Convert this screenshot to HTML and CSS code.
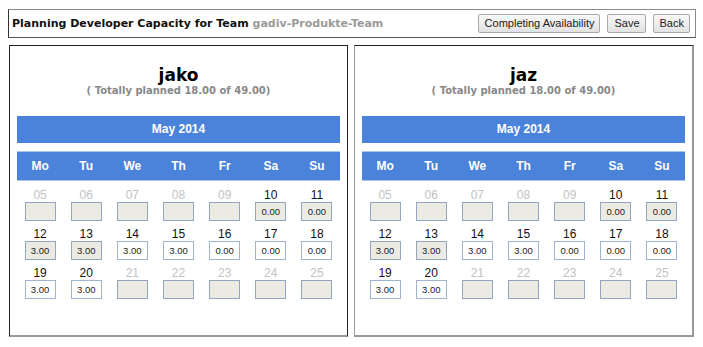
FILE: index.html
```html
<!DOCTYPE html>
<html>
<head>
<meta charset="utf-8">
<link rel="stylesheet" href="styles.css">
</head>
<body>
<div class="topbar">
  <div class="title">Planning Developer Capacity for Team <span class="team">gadiv-Produkte-Team</span></div>
  <div class="actions">
    <button class="btn">Completing Availability</button>
    <button class="btn">Save</button>
    <button class="btn">Back</button>
  </div>
</div>
<div class="panels">
  <div class="panel panel-left">
    <div class="name">jako</div>
    <div class="total">( Totally planned 18.00 of 49.00)</div>
    <div class="month">May 2014</div>
    <div class="weekdays"><span>Mo</span><span>Tu</span><span>We</span><span>Th</span><span>Fr</span><span>Sa</span><span>Su</span></div>
    <div class="days">
      <div class="day off"><span class="num">05</span><input class="cap locked" value="" readonly></div>
      <div class="day off"><span class="num">06</span><input class="cap locked" value="" readonly></div>
      <div class="day off"><span class="num">07</span><input class="cap locked" value="" readonly></div>
      <div class="day off"><span class="num">08</span><input class="cap locked" value="" readonly></div>
      <div class="day off"><span class="num">09</span><input class="cap locked" value="" readonly></div>
      <div class="day"><span class="num">10</span><input class="cap locked" value="0.00" readonly></div>
      <div class="day"><span class="num">11</span><input class="cap locked" value="0.00" readonly></div>
      <div class="day"><span class="num">12</span><input class="cap locked" value="3.00" readonly></div>
      <div class="day"><span class="num">13</span><input class="cap locked" value="3.00" readonly></div>
      <div class="day"><span class="num">14</span><input class="cap" value="3.00"></div>
      <div class="day"><span class="num">15</span><input class="cap" value="3.00"></div>
      <div class="day"><span class="num">16</span><input class="cap" value="0.00"></div>
      <div class="day"><span class="num">17</span><input class="cap" value="0.00"></div>
      <div class="day"><span class="num">18</span><input class="cap" value="0.00"></div>
      <div class="day"><span class="num">19</span><input class="cap" value="3.00"></div>
      <div class="day"><span class="num">20</span><input class="cap" value="3.00"></div>
      <div class="day off"><span class="num">21</span><input class="cap locked" value="" readonly></div>
      <div class="day off"><span class="num">22</span><input class="cap locked" value="" readonly></div>
      <div class="day off"><span class="num">23</span><input class="cap locked" value="" readonly></div>
      <div class="day off"><span class="num">24</span><input class="cap locked" value="" readonly></div>
      <div class="day off"><span class="num">25</span><input class="cap locked" value="" readonly></div>
    </div>
  </div>
  <div class="panel panel-right">
    <div class="name">jaz</div>
    <div class="total">( Totally planned 18.00 of 49.00)</div>
    <div class="month">May 2014</div>
    <div class="weekdays"><span>Mo</span><span>Tu</span><span>We</span><span>Th</span><span>Fr</span><span>Sa</span><span>Su</span></div>
    <div class="days">
      <div class="day off"><span class="num">05</span><input class="cap locked" value="" readonly></div>
      <div class="day off"><span class="num">06</span><input class="cap locked" value="" readonly></div>
      <div class="day off"><span class="num">07</span><input class="cap locked" value="" readonly></div>
      <div class="day off"><span class="num">08</span><input class="cap locked" value="" readonly></div>
      <div class="day off"><span class="num">09</span><input class="cap locked" value="" readonly></div>
      <div class="day"><span class="num">10</span><input class="cap locked" value="0.00" readonly></div>
      <div class="day"><span class="num">11</span><input class="cap locked" value="0.00" readonly></div>
      <div class="day"><span class="num">12</span><input class="cap locked" value="3.00" readonly></div>
      <div class="day"><span class="num">13</span><input class="cap locked" value="3.00" readonly></div>
      <div class="day"><span class="num">14</span><input class="cap" value="3.00"></div>
      <div class="day"><span class="num">15</span><input class="cap" value="3.00"></div>
      <div class="day"><span class="num">16</span><input class="cap" value="0.00"></div>
      <div class="day"><span class="num">17</span><input class="cap" value="0.00"></div>
      <div class="day"><span class="num">18</span><input class="cap" value="0.00"></div>
      <div class="day"><span class="num">19</span><input class="cap" value="3.00"></div>
      <div class="day"><span class="num">20</span><input class="cap" value="3.00"></div>
      <div class="day off"><span class="num">21</span><input class="cap locked" value="" readonly></div>
      <div class="day off"><span class="num">22</span><input class="cap locked" value="" readonly></div>
      <div class="day off"><span class="num">23</span><input class="cap locked" value="" readonly></div>
      <div class="day off"><span class="num">24</span><input class="cap locked" value="" readonly></div>
      <div class="day off"><span class="num">25</span><input class="cap locked" value="" readonly></div>
    </div>
  </div>
</div>
</body>
</html>
```
FILE: styles.css
```css
html, body {
  margin: 0;
  background: #ffffff;
}
body {
  padding: 9px 7px 0 8px;
  font-family: "DejaVu Sans", Verdana, sans-serif;
  color: #000;
}
.topbar {
  display: flex;
  align-items: center;
  justify-content: space-between;
  height: 27px;
  border: 1px solid #8a8a8a;
  border-left-color: #333;
  border-bottom-color: #555;
  padding: 0 5px 0 3px;
}
.title {
  font-size: 11px;
  font-weight: bold;
  color: #111;
}
.team {
  color: #9a9a9a;
}
.actions {
  display: flex;
  gap: 7px;
}
.btn {
  font-family: "Liberation Sans", Arial, sans-serif;
  font-size: 11px;
  color: #222;
  height: 19px;
  padding: 0 5px 0 6px;
  border: 1px solid #a9a9a9;
  border-radius: 2px;
  background: linear-gradient(#f8f8f8, #e2e2e2);
  line-height: 17px;
}
.panels {
  display: flex;
  gap: 6px;
  margin: 7px 2px 0 1px;
}
.panel {
  flex: 1 1 0;
  height: 292px;
  padding: 19px 7px 0 7px;
  box-sizing: border-box;
}
.panel-left {
  border: 1px solid #222;
  border-bottom: 2px solid #999;
}
.panel-right {
  border-top: 1px solid #222;
  border-left: 1px solid #9a9a9a;
  border-right: 2px solid #999;
  border-bottom: 2px solid #999;
}
.name {
  text-align: center;
  font-size: 17px;
  font-weight: bold;
  line-height: 20px;
  color: #000;
}
.total {
  text-align: center;
  font-size: 10px;
  font-weight: bold;
  line-height: 12px;
  color: #888;
}
.month {
  margin-top: 19px;
  height: 27px;
  line-height: 27px;
  background: #4a83d9;
  color: #fff;
  text-align: center;
  font-family: "Liberation Sans", Arial, sans-serif;
  font-weight: bold;
  font-size: 12px;
}
.weekdays {
  margin-top: 8px;
  display: grid;
  grid-template-columns: repeat(7, 1fr);
  height: 28px;
  line-height: 28px;
  background: #4a83d9;
  border-top: 1px solid #a9c6f0;
  border-bottom: 1px solid #a9c6f0;
  color: #fff;
  text-align: center;
  font-family: "Liberation Sans", Arial, sans-serif;
  font-weight: bold;
  font-size: 12px;
}
.days {
  display: grid;
  grid-template-columns: repeat(7, 1fr);
  row-gap: 6px;
  padding-top: 7px;
}
.day {
  display: flex;
  flex-direction: column;
  align-items: center;
}
.num {
  font-family: "Liberation Sans", Arial, sans-serif;
  font-size: 12px;
  line-height: 14px;
  color: #111;
}
.day.off .num {
  color: #c2c2c2;
}
.cap {
  box-sizing: border-box;
  width: 31px;
  height: 19px;
  margin: 0;
  padding: 0;
  border: 1px solid #9fb4cf;
  background: #fff;
  text-align: center;
  font-family: "Liberation Sans", Arial, sans-serif;
  font-size: 9.5px;
  color: #222;
  outline: none;
}
.cap.locked {
  background: #ebebe4;
  border-color: #92a6bf;
}
```
